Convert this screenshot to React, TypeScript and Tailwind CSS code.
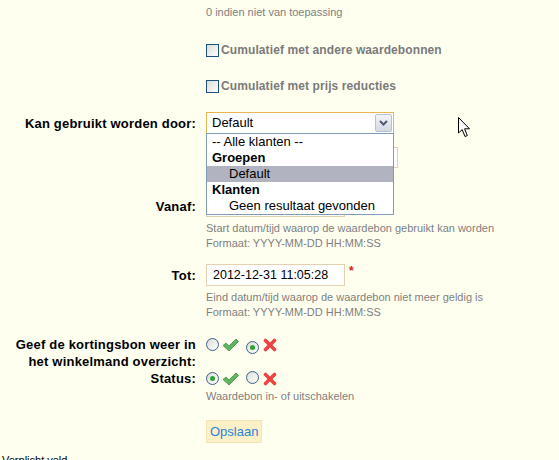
import React from 'react';

const font = { fontFamily: '"Liberation Sans", Arial, sans-serif' };

function Checkbox() {
  return (
    <span className="inline-block w-[13px] h-[13px] border border-[#1c5180] bg-gradient-to-br from-[#dcdcd6] to-[#ffffff] shrink-0" />
  );
}

function Radio({ checked }: { checked?: boolean }) {
  return (
    <span className="inline-flex items-center justify-center w-[13px] h-[13px] rounded-full border border-[#3b5f8a] bg-gradient-to-br from-[#dcdcd6] to-[#ffffff] shrink-0">
      {checked && <span className="w-[5px] h-[5px] rounded-full bg-[#2fa52f]" />}
    </span>
  );
}

function Check() {
  return (
    <svg width="17" height="14" viewBox="0 0 17 14" className="shrink-0">
      <polygon points="1,7.5 4,5 7,8 14,1 16.5,3.5 7,13" fill="#5fb55f" stroke="#3f8f3f" strokeWidth="0.8" strokeLinejoin="round" />
    </svg>
  );
}

function Cross() {
  return (
    <svg width="14" height="14" viewBox="0 0 14 14" className="shrink-0">
      <line x1="2.5" y1="2.5" x2="11.5" y2="11.5" stroke="#ee4444" strokeWidth="3.6" strokeLinecap="round" />
      <line x1="11.5" y1="2.5" x2="2.5" y2="11.5" stroke="#ee4444" strokeWidth="3.6" strokeLinecap="round" />
    </svg>
  );
}

function Row({ label, children, className = '' }: { label?: React.ReactNode; children: React.ReactNode; className?: string }) {
  return (
    <div className={`flex ${className}`}>
      <div className="w-[196px] shrink-0 text-right text-[13px] font-bold text-black leading-[17px] tracking-[0.2px]">{label}</div>
      <div className="ml-[10px] flex-1">{children}</div>
    </div>
  );
}

const hint = 'text-[11px] text-[#808080] leading-[15px]';

export default function App() {
  return (
    <div className="relative w-[559px] h-[460px] overflow-hidden bg-[#fffff0]" style={font}>
      <div className="pt-[5px]">
        <Row>
          <div className={hint}>0 indien niet van toepassing</div>
        </Row>

        <Row className="mt-[22px]">
          <label className="flex items-center gap-[2px] h-[16px]">
            <Checkbox />
            <span className="text-[12px] font-bold text-[#7a7a7a] tracking-[0.1px]">Cumulatief met andere waardebonnen</span>
          </label>
        </Row>

        <Row className="mt-[20px]">
          <label className="flex items-center gap-[2px] h-[16px]">
            <Checkbox />
            <span className="text-[12px] font-bold text-[#7a7a7a] tracking-[0.1px]">Cumulatief met prijs reducties</span>
          </label>
        </Row>

        <Row className="mt-[18px] items-center" label="Kan gebruikt worden door:">
          <div className="relative w-[188px] h-[22px] border border-[#e8b752] bg-white flex items-center">
            <span className="pl-[5px] text-[13px] text-black flex-1">Default</span>
            <span className="mr-[1px] w-[17px] h-[18px] rounded-[2px] border border-[#b8c0d4] bg-gradient-to-b from-[#f4f5f8] to-[#d4d8e2] flex items-center justify-center">
              <svg width="9" height="6" viewBox="0 0 9 6">
                <polyline points="1,1 4.5,4.5 8,1" fill="none" stroke="#4d5a73" strokeWidth="2" />
              </svg>
            </span>
            {/* open dropdown list */}
            <div className="absolute left-[-1px] top-[20px] w-[188px] border border-[#7f9db9] bg-white z-10 text-[13px] leading-[16px] text-black">
              <div className="pl-[5px]">-- Alle klanten --</div>
              <div className="pl-[5px] font-bold">Groepen</div>
              <div className="pl-[22px] bg-[#b1b4c0]">Default</div>
              <div className="pl-[5px] font-bold">Klanten</div>
              <div className="pl-[22px]">Geen resultaat gevonden</div>
            </div>
          </div>
        </Row>

        <Row className="mt-[13px]">
          <div className="flex items-center">
            <span className="w-[192px] h-[21px] border border-[#e3d2b0] bg-white" />
          </div>
        </Row>

        <Row className="mt-[28px] items-center" label="Vanaf:">
          <div className="w-[139px] h-[21px] border border-[#e3d2b0] bg-white" />
        </Row>
        <Row className="mt-[4px]">
          <div className={hint}>Start datum/tijd waarop de waardebon gebruikt kan worden</div>
          <div className={hint}>Formaat: YYYY-MM-DD HH:MM:SS</div>
        </Row>

        <Row className="mt-[13px] items-center" label="Tot:">
          <div className="flex items-start">
            <div className="w-[139px] h-[22px] border border-[#e3d2b0] bg-white flex items-center pl-[6px] text-[12.5px] text-black">
              2012-12-31 11:05:28
            </div>
            <span className="ml-[4px] -mt-[2px] text-[12px] font-bold text-[#d02020]">*</span>
          </div>
        </Row>
        <Row className="mt-[4px]">
          <div className={hint}>Eind datum/tijd waarop de waardebon niet meer geldig is</div>
          <div className={hint}>Formaat: YYYY-MM-DD HH:MM:SS</div>
        </Row>

        <Row
          className="mt-[16px]"
          label={
            <>
              Geef de kortingsbon weer in
              <br />
              het winkelmand overzicht:
            </>
          }
        >
          <div className="flex items-center h-[17px]">
            <Radio />
            <span className="ml-[3px]"><Check /></span>
            <span className="ml-[7px]"><Radio checked /></span>
            <span className="ml-[4px]"><Cross /></span>
          </div>
        </Row>

        <Row label="Status:">
          <div className="flex items-center h-[17px]">
            <Radio checked />
            <span className="ml-[3px]"><Check /></span>
            <span className="ml-[7px]"><Radio /></span>
            <span className="ml-[4px]"><Cross /></span>
          </div>
        </Row>
        <Row className="mt-[2px]">
          <div className={hint}>Waardebon in- of uitschakelen</div>
        </Row>

        <Row className="mt-[15px]">
          <button className="h-[23px] px-[3px] bg-[#fcf0c8] border border-[#f3e4b6] text-[13px] text-[#2b83d6]">
            Opslaan
          </button>
        </Row>

        <div className="mt-[10px] pl-[2px] text-[11px] text-black leading-[14px]">Verplicht veld</div>
      </div>

      {/* mouse cursor */}
      <svg className="absolute left-[458px] top-[117px]" width="13" height="21" viewBox="0 0 13 21">
        <polygon points="0.5,0.5 0.5,16 4.2,12.6 7,19.5 9.3,18.6 6.6,11.8 11.5,11.8" fill="white" stroke="black" strokeWidth="1" strokeLinejoin="miter" />
      </svg>
    </div>
  );
}
